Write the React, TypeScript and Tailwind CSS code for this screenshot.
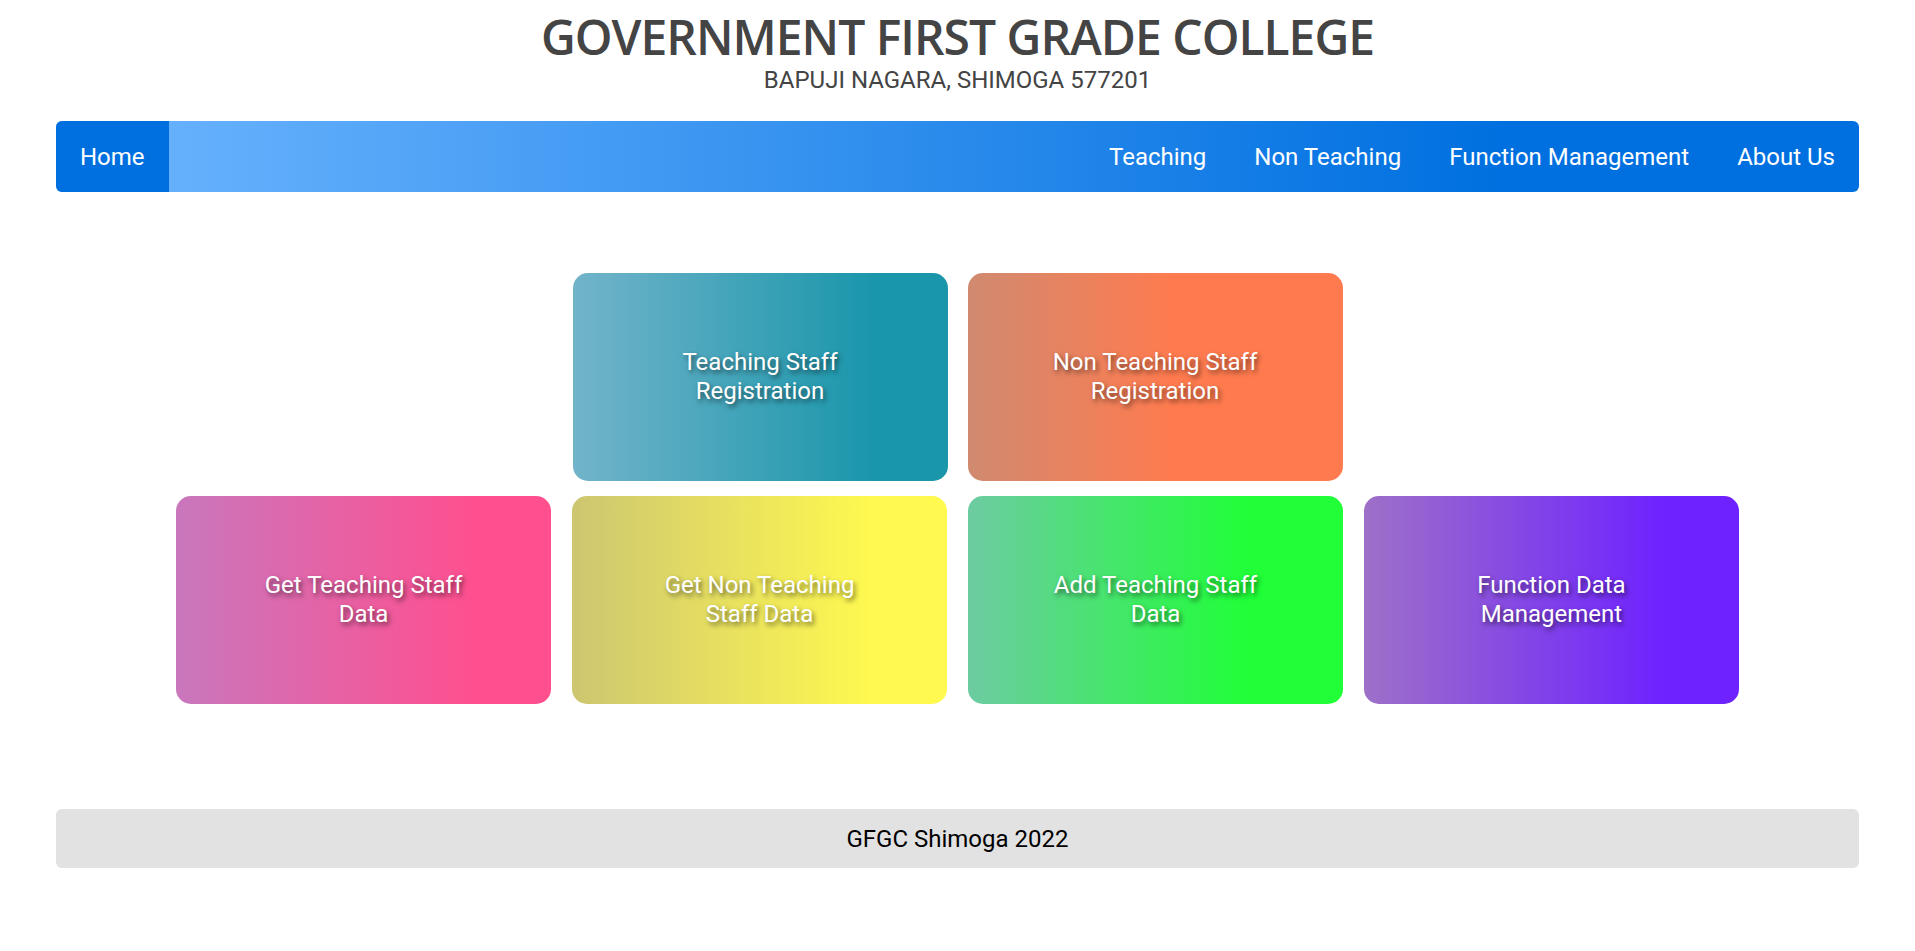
import React from "react";

const cards = [
  { id: "ts", label: "Teaching Staff Registration", bg: "bg-[linear-gradient(90deg,#72b4ca_0%,#1a96ab_80%)]" },
  { id: "nts", label: "Non Teaching Staff Registration", bg: "bg-[linear-gradient(90deg,#d08a70_0%,#ff7b4f_55%)]" },
];

const cards2 = [
  { id: "gts", label: "Get Teaching Staff Data", bg: "bg-[linear-gradient(90deg,#c977bd_0%,#ff4f8f_80%)]" },
  { id: "gnts", label: "Get Non Teaching Staff Data", bg: "bg-[linear-gradient(90deg,#cdc670_0%,#fff950_80%)]" },
  { id: "ats", label: "Add Teaching Staff Data", bg: "bg-[linear-gradient(90deg,#6dcba2_0%,#20ff38_75%)]" },
  { id: "fdm", label: "Function Data Management", bg: "bg-[linear-gradient(90deg,#9e70c8_0%,#6e22ff_80%)]" },
];

function Card({ label, bg }: { label: string; bg: string }) {
  return (
    <div
      className={`${bg} w-[375px] h-[208px] rounded-[15px] flex items-center justify-center px-[70px] cursor-pointer`}
    >
      <p className="text-white text-center text-[24px] leading-[29px] [text-shadow:2px_3px_5px_rgba(0,0,0,0.55)]">
        {label}
      </p>
    </div>
  );
}

function App() {
  return (
    <div className="min-h-screen bg-white font-['Roboto',sans-serif]">
      <div className="text-center pt-[8px]">
        <h1 className="font-['Open_Sans',sans-serif] font-semibold text-[48px] leading-[58px] text-[#444] tracking-[-1px]">
          GOVERNMENT FIRST GRADE COLLEGE
        </h1>
        <h3 className="text-[24px] leading-[28px] text-[#444]">BAPUJI NAGARA, SHIMOGA 577201</h3>
      </div>

      <nav className="mx-[56px] mt-[27px] h-[71px] rounded-[6px] overflow-hidden flex bg-[linear-gradient(90deg,#6eb6ff_0%,#0070e0_80%)]">
        <a className="bg-[#0070e0] text-white text-[24px] px-[24px] flex items-center">Home</a>
        <div className="ml-auto flex">
          {["Teaching", "Non Teaching", "Function Management", "About Us"].map((item) => (
            <a key={item} className="text-white text-[24px] px-[24px] flex items-center cursor-pointer">
              {item}
            </a>
          ))}
        </div>
      </nav>

      <div className="mt-[81px] flex flex-col items-center gap-[15px]">
        <div className="flex gap-[20px]">
          {cards.map((c) => (
            <Card key={c.id} label={c.label} bg={c.bg} />
          ))}
        </div>
        <div className="flex gap-[21px]">
          {cards2.map((c) => (
            <Card key={c.id} label={c.label} bg={c.bg} />
          ))}
        </div>
      </div>

      <footer className="mx-[56px] mt-[105px] h-[59px] rounded-[6px] bg-[#e2e2e2] flex items-center justify-center">
        <p className="text-[24px] text-black">GFGC Shimoga 2022</p>
      </footer>
    </div>
  );
}

export default App;
